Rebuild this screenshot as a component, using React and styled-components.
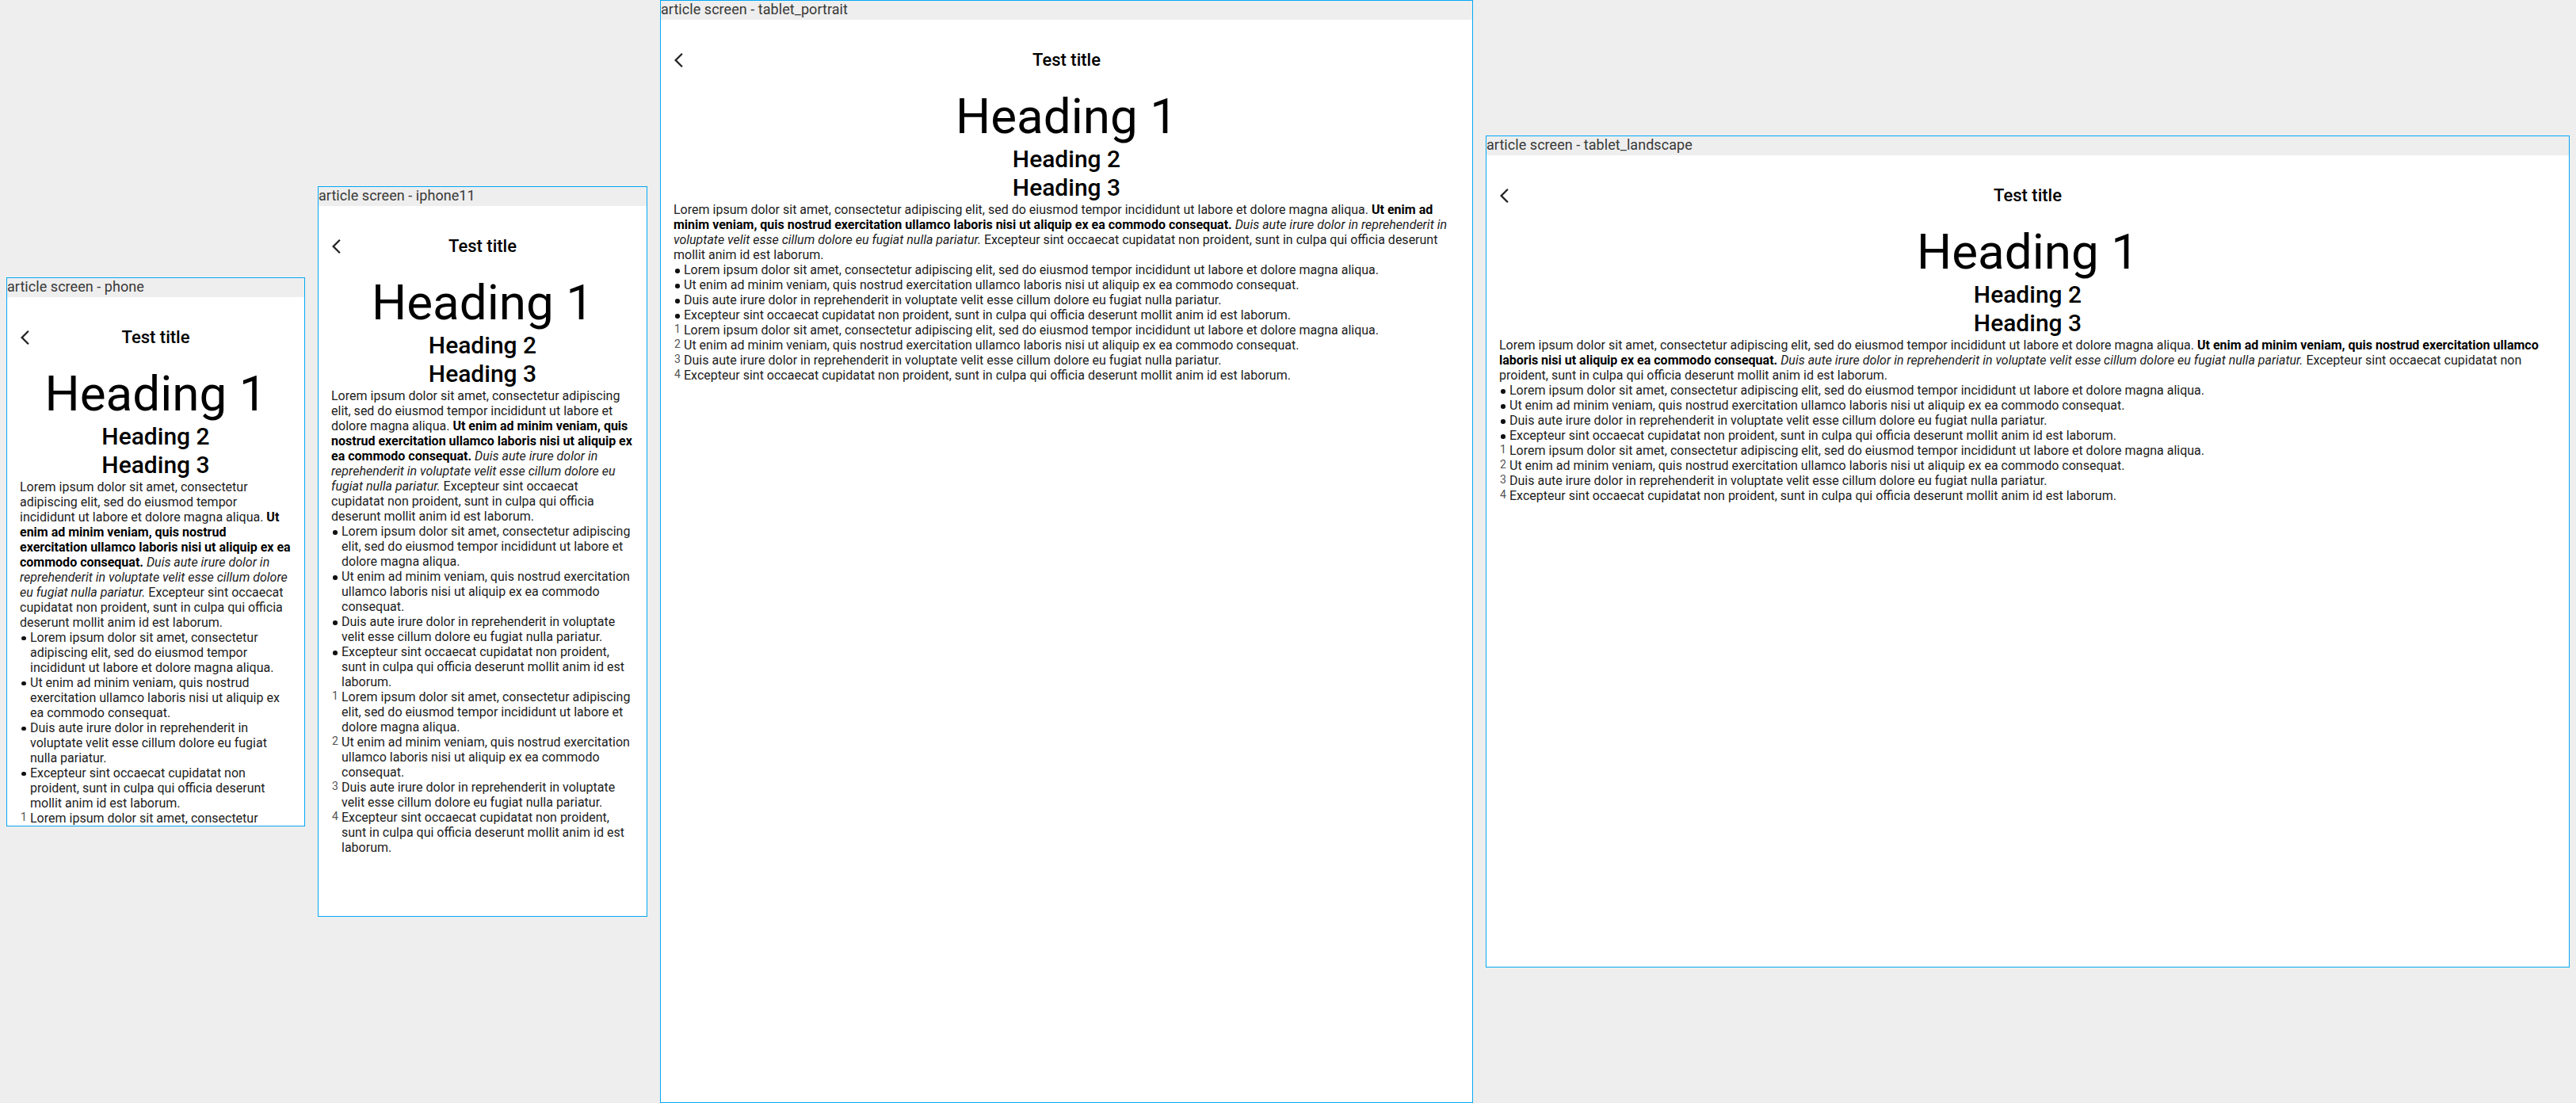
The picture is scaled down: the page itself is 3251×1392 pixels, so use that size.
import React from "react";
import styled, { createGlobalStyle } from "styled-components";

const devices = [
  { name: "phone", width: 375, height: 667 },
  { name: "iphone11", width: 414, height: 896 },
  { name: "tablet_portrait", width: 1024, height: 1366 },
  { name: "tablet_landscape", width: 1366, height: 1024 },
];

const sentences = [
  "Lorem ipsum dolor sit amet, consectetur adipiscing elit, sed do eiusmod tempor incididunt ut labore et dolore magna aliqua.",
  "Ut enim ad minim veniam, quis nostrud exercitation ullamco laboris nisi ut aliquip ex ea commodo consequat.",
  "Duis aute irure dolor in reprehenderit in voluptate velit esse cillum dolore eu fugiat nulla pariatur.",
  "Excepteur sint occaecat cupidatat non proident, sunt in culpa qui officia deserunt mollit anim id est laborum.",
];

const GlobalStyle = createGlobalStyle`
  html, body {
    margin: 0;
    padding: 0;
    background: #eeeeee;
  }
  body {
    font-family: Roboto, "Noto Sans", sans-serif;
  }
`;

const Canvas = styled.div`
  display: flex;
  align-items: center;
  gap: 16px;
  height: 1392px;
  padding: 0 8px;
  box-sizing: border-box;
`;

const DeviceFrame = styled.div`
  display: flex;
  flex-direction: column;
  flex-shrink: 0;
  border: 1px solid #03a9f4;
  background: #fff;
`;

const FrameLabel = styled.div`
  height: 24px;
  background: #eeeeee;
  color: #383838;
  font-size: 18px;
  font-weight: 400;
  letter-spacing: 0.05px;
  line-height: 22px;
  white-space: nowrap;
  overflow: hidden;
`;

const Screen = styled.div`
  width: ${(p) => p.$w}px;
  height: ${(p) => p.$h}px;
  overflow: hidden;
  background: #fff;
  padding: 38px 16px 0;
  box-sizing: border-box;
`;

const Header = styled.div`
  display: grid;
  grid-template-columns: 1fr auto 1fr;
  align-items: center;
  height: 26px;
`;

const BackButton = styled.svg`
  display: block;
  width: 22px;
  height: 22px;
  margin-left: 1px;
  fill: #222;
`;

const Title = styled.div`
  font-size: 22px;
  font-weight: 500;
  line-height: 26px;
  color: #000;
`;

const Heading1 = styled.h1`
  margin: 22px 0 0;
  font-size: 62px;
  font-weight: 400;
  line-height: 72px;
  text-align: center;
  color: #000;
`;

const Heading2 = styled.h2`
  margin: 0;
  font-size: 30px;
  font-weight: 500;
  line-height: 36px;
  text-align: center;
  color: #000;
`;

const Heading3 = styled(Heading2).attrs({ as: "h3" })``;

const Paragraph = styled.p`
  margin: 0;
  font-size: 16px;
  line-height: 19px;
  color: #1c1c1c;

  strong {
    font-weight: 700;
    color: #000;
  }
`;

const List = styled.div`
  display: flex;
  flex-direction: column;
`;

const ListItem = styled.div`
  display: flex;
  font-size: 16px;
  line-height: 19px;
  color: #1c1c1c;
`;

const Marker = styled.span`
  flex: 0 0 13px;
  font-size: 14px;
  line-height: 17px;
  color: #555;
  padding-left: 1px;
  box-sizing: border-box;
`;

const Dot = styled.span`
  display: block;
  width: 5.5px;
  height: 5.5px;
  margin: 8px 0 0 1px;
  border-radius: 50%;
  background: #111;
`;

const ItemText = styled.span`
  flex: 1;
`;

function ArticleScreen({ width, height }) {
  return (
    <Screen $w={width} $h={height}>
      <Header>
        <BackButton viewBox="0 0 24 24">
          <path d="M11.67 3.87L9.9 2.1 0 12l9.9 9.9 1.77-1.77L3.54 12z" />
        </BackButton>
        <Title>Test title</Title>
        <span />
      </Header>
      <Heading1>Heading 1</Heading1>
      <Heading2>Heading 2</Heading2>
      <Heading3>Heading 3</Heading3>
      <Paragraph>
        Lorem ipsum dolor sit amet, consectetur adipiscing elit, sed do eiusmod
        tempor incididunt ut labore et dolore magna aliqua.{" "}
        <strong>
          Ut enim ad minim veniam, quis nostrud exercitation ullamco laboris
          nisi ut aliquip ex ea commodo consequat.
        </strong>{" "}
        <em>
          Duis aute irure dolor in reprehenderit in voluptate velit esse cillum
          dolore eu fugiat nulla pariatur.
        </em>{" "}
        Excepteur sint occaecat cupidatat non proident, sunt in culpa qui
        officia deserunt mollit anim id est laborum.
      </Paragraph>
      <List>
        {sentences.map((s) => (
          <ListItem key={"b" + s}>
            <Marker>
              <Dot />
            </Marker>
            <ItemText>{s}</ItemText>
          </ListItem>
        ))}
      </List>
      <List>
        {sentences.map((s, i) => (
          <ListItem key={"n" + s}>
            <Marker>{i + 1}</Marker>
            <ItemText>{s}</ItemText>
          </ListItem>
        ))}
      </List>
    </Screen>
  );
}

export default function App() {
  return (
    <>
      <GlobalStyle />
      <Canvas>
        {devices.map((d) => (
          <DeviceFrame key={d.name}>
            <FrameLabel>article screen - {d.name}</FrameLabel>
            <ArticleScreen width={d.width} height={d.height} />
          </DeviceFrame>
        ))}
      </Canvas>
    </>
  );
}
